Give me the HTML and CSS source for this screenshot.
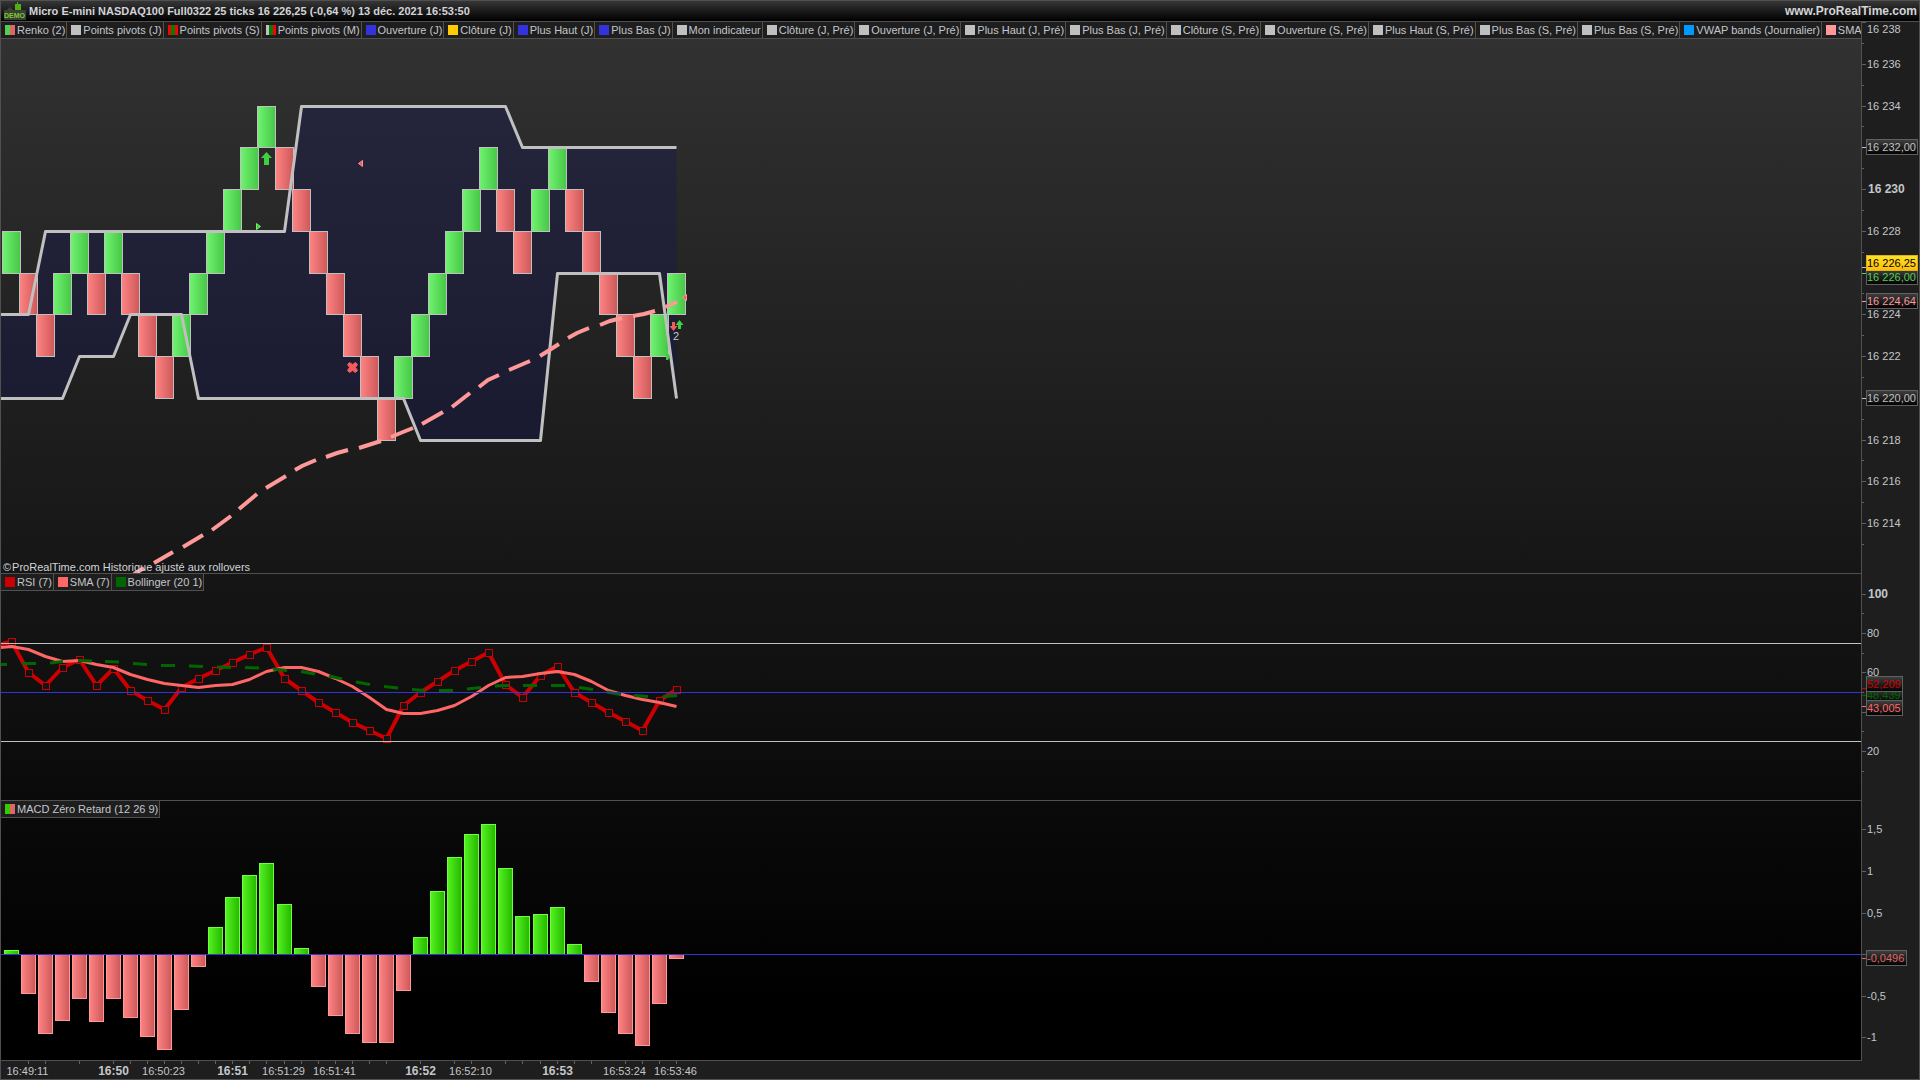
FILE: index.html
```html
<!DOCTYPE html>
<html lang="fr">
<head>
<meta charset="utf-8">
<title>Micro E-mini NASDAQ100 Full0322</title>
<link rel="stylesheet" href="styles.css">
</head>
<body>
<div class="window">
  <header class="titlebar">
    <svg class="demo" width="24" height="20" aria-hidden="true">
      <path class="demo-dark" d="M7 6v3M5 8h4v4H5z"/>
      <path class="demo-green" d="M14 1h1v2h3v7h-6V3h2z"/>
      <rect class="demo-plate" x="1" y="9" width="22" height="10"/>
      <text class="demo-text" x="1" y="17">DEMO</text>
    </svg>
    <h1 class="title">Micro E-mini NASDAQ100 Full0322 25 ticks 16 226,25 (-0,64 %) 13 déc. 2021 16:53:50</h1>
    <a class="site" href="#">www.ProRealTime.com</a>
  </header>
  <main class="body">
    <div class="charts">
      <section class="pane">
        <ul class="legend">
          <li><i class="sw sw-renko"></i>Renko (2)</li>
          <li><i class="sw sw-grey"></i>Points pivots (J)</li>
          <li><i class="sw sw-pivot-s"></i>Points pivots (S)</li>
          <li><i class="sw sw-pivot-m"></i>Points pivots (M)</li>
          <li><i class="sw sw-blue"></i>Ouverture (J)</li>
          <li><i class="sw sw-gold"></i>Clôture (J)</li>
          <li><i class="sw sw-blue"></i>Plus Haut (J)</li>
          <li><i class="sw sw-blue"></i>Plus Bas (J)</li>
          <li><i class="sw sw-grey"></i>Mon indicateur</li>
          <li><i class="sw sw-grey"></i>Clôture (J, Pré)</li>
          <li><i class="sw sw-grey"></i>Ouverture (J, Pré)</li>
          <li><i class="sw sw-grey"></i>Plus Haut (J, Pré)</li>
          <li><i class="sw sw-grey"></i>Plus Bas (J, Pré)</li>
          <li><i class="sw sw-grey"></i>Clôture (S, Pré)</li>
          <li><i class="sw sw-grey"></i>Ouverture (S, Pré)</li>
          <li><i class="sw sw-grey"></i>Plus Haut (S, Pré)</li>
          <li><i class="sw sw-grey"></i>Plus Bas (S, Pré)</li>
          <li><i class="sw sw-grey"></i>Plus Bas (S, Pré)</li>
          <li><i class="sw sw-sky"></i>VWAP bands (Journalier)</li>
          <li><i class="sw sw-pink"></i>SMA</li>
        </ul>
        <svg class="plot" id="price"></svg>
        <p class="credit"><span>©</span><span>ProRealTime.com</span><span class="note">Historique ajusté aux rollovers</span></p>
      </section>
      <section class="pane">
        <ul class="legend">
          <li><i class="sw sw-red"></i>RSI (7)</li>
          <li><i class="sw sw-coral"></i>SMA (7)</li>
          <li><i class="sw sw-green"></i>Bollinger (20 1)</li>
        </ul>
        <svg class="plot" id="rsi"></svg>
      </section>
      <section class="pane">
        <ul class="legend">
          <li><i class="sw sw-macd"></i>MACD Zéro Retard (12 26 9)</li>
        </ul>
        <svg class="plot" id="macd"></svg>
      </section>
    </div>
    <aside class="scales">
      <svg class="scale" id="price-scale"></svg>
      <svg class="scale" id="rsi-scale"></svg>
      <svg class="scale" id="macd-scale"></svg>
    </aside>
  </main>
  <footer class="times"><svg class="plot" id="time-scale"></svg></footer>
</div>
<svg class="defs" width="0" height="0" aria-hidden="true">
  <defs>
    <linearGradient id="g-up"><stop offset="0" stop-color="#70f470"/><stop offset="1" stop-color="#46c646"/></linearGradient>
    <linearGradient id="g-down"><stop offset="0" stop-color="#ff8484"/><stop offset="1" stop-color="#cd5858"/></linearGradient>
    <linearGradient id="g-macd"><stop offset="0" stop-color="#55f220"/><stop offset="1" stop-color="#24b800"/></linearGradient>
    <linearGradient id="g-tag" x2="0" y2="1"><stop offset="0" stop-color="#404040"/><stop offset="1" stop-color="#000"/></linearGradient>
    <linearGradient id="g-last" x2="0" y2="1"><stop offset="0" stop-color="#ffe128"/><stop offset="1" stop-color="#ffbe0a"/></linearGradient>
  </defs>
</svg>
<script src="chart.js"></script>
</body>
</html>
```
FILE: styles.css
```css
* { box-sizing: border-box; }
body {
  margin: 0;
  background: #1e1e1e;
  color: #c3c6cb;
  font: 11px/14px "Liberation Sans", Arial, sans-serif;
}
.window {
  min-height: 100vh;
  display: flex;
  flex-direction: column;
  border: 1px solid #505050;
}
.titlebar {
  flex: none;
  height: 21px;
  display: flex;
  align-items: center;
  gap: 2px;
  padding: 0 2px;
  border-bottom: 1px solid #505050;
  background: linear-gradient(#363636, #000);
}
.demo { flex: none; }
.demo-dark { fill: #3c4a3c; stroke: #3c4a3c; }
.demo-green { fill: #4fae14; }
.demo-plate { fill: #3a4038; }
.demo-text { font: bold 7px "Liberation Sans", Arial, sans-serif; fill: #7ccc28; }
.title { margin: 0; font-size: 11px; font-weight: bold; line-height: 16px; color: #d2d4d8; white-space: nowrap; }
.site { margin-left: auto; font-size: 12px; font-weight: bold; line-height: 16px; color: #d2d4d8; text-decoration: none; }

.body { flex: 1; display: flex; }
.charts, .scales {
  display: grid;
  grid-template-rows: minmax(0, 552fr) minmax(0, 227fr) minmax(0, 260fr);
}
.charts {
  flex: 1;
  min-width: 0;
  background: linear-gradient(#323232, #1a1a1a 45%, #0a0a0a 75%, #000 95%);
}
.pane { position: relative; min-width: 0; overflow: hidden; border-bottom: 1px solid #505050; }
.plot { display: block; width: 100%; height: 100%; }
.legend {
  position: absolute;
  top: 0;
  left: 0;
  z-index: 1;
  display: flex;
  margin: 0;
  padding: 0;
  list-style: none;
}
.legend li {
  flex: none;
  display: flex;
  align-items: center;
  gap: 2px;
  height: 17px;
  padding: 0 1px 0 4px;
  border: solid #505050;
  border-width: 0 1px 1px 0;
  background: #1e1e1e;
  white-space: nowrap;
}
.sw { width: 10px; height: 10px; }
.sw-renko { background: linear-gradient(90deg, #55cc55 50%, #dd6666 50%); }
.sw-macd { background: linear-gradient(90deg, #33cc00 50%, #dd6666 50%); }
.sw-pivot-s { background: linear-gradient(90deg, #ff0000 30%, #008000 30% 70%, #ff0000 70%); }
.sw-pivot-m { background: linear-gradient(90deg, #c0c0c0 30%, #008000 30% 70%, #ff0000 70%); }
.sw-grey { background: #c0c0c0; }
.sw-blue { background: #3333dd; }
.sw-gold { background: #ffcc00; }
.sw-sky { background: #0099ff; }
.sw-pink { background: #ff9999; }
.sw-red { background: #cc0000; }
.sw-coral { background: #ff6666; }
.sw-green { background: #006600; }
.credit {
  position: absolute;
  left: 2px;
  bottom: 0;
  display: flex;
  gap: 1px;
  margin: 0;
  line-height: 12px;
  color: #d2d4d8;
}
.note { padding-left: 2px; }

.scales {
  flex: none;
  width: 58px;
  border-left: 1px solid #505050;
}
.scale { display: block; width: 100%; height: 100%; overflow: hidden; }
.times { flex: none; height: 18px; }
.defs { position: absolute; }

/* plot marks */
.up { fill: url(#g-up); stroke: #c0c0c0; }
.down { fill: url(#g-down); stroke: #c0c0c0; }
.cloud { fill: rgb(22 22 82 / 37%); }
.channel { fill: none; stroke: #c0c0c0; stroke-width: 3; stroke-linejoin: round; }
.sma50 { fill: none; stroke: #ff9999; stroke-width: 4; }
.buy { fill: #3fd03f; }
.sell { fill: #f25c5c; }
.cross { fill: #f25c5c; stroke: #f25c5c; stroke-linejoin: round; }
.buy-entry { fill: #3fd03f; stroke: #6cf06c; stroke-width: 1; }
.sell-entry { fill: #f25c5c; stroke: #ff9494; stroke-width: 1; }
.rsi { fill: none; stroke: #cc0000; stroke-width: 4; stroke-linejoin: round; }
.dot { fill: #131313; stroke: #cc0000; }
.sma7 { fill: none; stroke: #ff6666; stroke-width: 3; stroke-linejoin: round; }
.boll { fill: none; stroke: #006600; stroke-width: 3; }
.bound { fill: #c0c0c0; }
.middle { fill: #3333dd; }
.macd-up { fill: url(#g-macd); stroke: #70ff40; }
.macd-down { fill: url(#g-down); stroke: #ff9999; }

/* scale marks */
.tick { fill: #606060; }
.label { fill: #c3c6cb; }
.strong { font-size: 12px; font-weight: bold; }
.mid { text-anchor: middle; }
.tag { fill: url(#g-tag); stroke: #606060; }
.tag-last { fill: url(#g-last); stroke: #e0b010; }
.c-grey { fill: #c0c0c0; }
.c-black { fill: #000; }
.c-green { fill: #55cc55; }
.c-pink { fill: #ff9999; }
.c-red { fill: #cc0000; }
.c-dark { fill: #006600; }
.c-coral { fill: #ff6666; }
.c-rose { fill: #dd6666; }
```
FILE: chart.js
```js
const NS = "http://www.w3.org/2000/svg";

function layer(id, top) {
  const g = document.createElementNS(NS, "g");
  g.setAttribute("transform", `translate(-1 ${-top})`);
  document.getElementById(id).append(g);
  return g;
}
function add(parent, name, attrs, text) {
  const el = document.createElementNS(NS, name);
  for (const key in attrs) el.setAttribute(key, attrs[key]);
  if (text) el.textContent = text;
  parent.append(el);
  return el;
}

// Time axis: one slot per brick
const slot = i => 4 + 17 * i + (i >= 16) + (i >= 31);
const mid = i => slot(i) + 7.5;
// Price axis: 2 points are 41.75 px
const py = p => Math.floor(106 + (234 - p) * 20.875);
const points = list => list.map(p => p.join(",")).join(" ");
const dashes = list => list.map(d => `M${d[0]} ${d[1]}L` + d.slice(2).join(" ")).join("");

// ---------- Price ----------
const price = layer("price", 22);
const high = [[0, 314.5], [28.5, 314.5], [45.5, 231.5], [284.5, 231.5], [301.5, 106.5], [505.5, 106.5], [522.5, 147.5], [676.5, 147.5]];
const low = [[0, 398.5], [62.5, 398.5], [79.5, 356.5], [113.5, 356.5], [130.5, 314.5], [181.5, 314.5], [198.5, 398.5], [403.5, 398.5],
  [420.5, 440.5], [540.5, 440.5], [557.5, 273.5], [659.5, 273.5], [676.5, 398.5]];
add(price, "polygon", { class: "cloud", points: points([...high, ...[...low].reverse()]) });

const bricks = "U228 D226 D224 U226 U228 D226 U228 D226 D224 D222 U224 U226 U228 U230 U232 U234 D232 D230 D228 D226 " +
  "D224 D222 D220 U222 U224 U226 U228 U230 U232 D230 D228 U230 U232 D230 D228 D226 D224 D222 U224 U226";
bricks.split(" ").forEach((b, i) => {
  const top = +b.slice(1);
  add(price, "rect", {
    class: b[0] === "U" ? "up" : "down",
    x: slot(i) - 1.5, y: py(top) + 0.5, width: 18, height: py(top - 2) - py(top)
  });
});
add(price, "polyline", { class: "channel", points: points(high) });
add(price, "polyline", { class: "channel", points: points(low) });
add(price, "path", { class: "sma50", d: dashes([
  [134, 574, 144, 568], [154, 563, 173, 552], [183, 547, 203, 535], [212, 530, 231, 516], [239, 509, 257, 494],
  [266, 488, 286, 476], [295, 470, 302, 466, 316, 460], [326, 457, 337, 453, 348, 450], [359, 448, 381, 441],
  [391, 437, 403, 432, 413, 428], [422, 424, 443, 412], [452, 407, 470, 393], [479, 387, 488, 380, 499, 375],
  [509, 370, 530, 361], [540, 356, 559, 344], [568, 338, 577, 333, 589, 328], [600, 325, 610, 321, 622, 318],
  [633, 316, 644, 314, 655, 311], [665, 307, 677, 302]
]) });
add(price, "path", { class: "buy", d: "M266.5 152L272 158H269V165H264V158H261z" });
add(price, "path", { class: "cross", d: "M349.5 362.5L352.5 364.5L355.5 362.5L357.5 364.5L355.5 367.5L357.5 370.5L355.5 372.5L352.5 370.5L349.5 372.5L347.5 370.5L349.5 367.5L347.5 364.5z" });
add(price, "path", { class: "buy-entry", d: "M256.5 223.5L260.5 226.5L256.5 229.5z" });
add(price, "path", { class: "sell-entry", d: "M362.5 160.5L358.5 163.5L362.5 166.5z" });
add(price, "path", { class: "sell-entry", d: "M686.5 294.5L682.5 297.5L686.5 300.5z" });
add(price, "path", { class: "buy", d: "M666 353H668L670 356.5L668 360H666z" });
add(price, "path", { class: "sell", d: "M673.5 331L677.5 326H675V322H672V326H669.5z" });
add(price, "path", { class: "buy", d: "M679.5 320L683.5 325H681V329H678V325H675.5z" });
add(price, "text", { class: "label mid", x: 676, y: 340 }, "2");

// ---------- RSI ----------
const rsi = layer("rsi", 574);
const rsiY = [641, 672, 685, 667, 659, 685, 668, 690, 700, 709, 687, 678, 670, 662, 654, 647, 678, 690, 702, 712,
  722, 730, 738, 705, 692, 681, 670, 661, 652, 684, 697, 675, 666, 692, 702, 712, 721, 730, 700, 689];
const smaY = [646, 649, 656, 661, 660, 664, 667, 674, 679, 683, 685, 687, 685, 684, 679, 671, 667, 667, 671, 678,
  686, 697, 709, 713, 713, 710, 705, 696, 685, 677, 676, 673, 671, 674, 681, 690, 695, 699, 702, 706];
const series = (start, ys) => points([[0, start], ...ys.map((y, i) => [mid(i), y + 0.5])]);
add(rsi, "polyline", { class: "rsi", points: series(644.5, rsiY) });
rsiY.forEach((y, i) => add(rsi, "rect", { class: "dot", x: mid(i) - 3, y: y - 2.5, width: 7, height: 7 }));
add(rsi, "polyline", { class: "sma7", points: series(647.5, smaY) });
add(rsi, "path", { class: "boll", d: dashes([
  [0, 664.5, 7, 664.5], [22, 663.5, 36, 663.5], [50, 663, 63, 661.5], [78, 660.5, 92, 661], [105, 661.5, 119, 662],
  [133, 663.5, 147, 664.5], [161, 665.5, 175, 665.5], [189, 666, 203, 666.5], [217, 667, 231, 667.5], [245, 667.5, 259, 668],
  [273, 669, 287, 670.5], [301, 671.5, 315, 674], [329, 676, 342, 679], [356, 682, 370, 684.5], [384, 686.5, 398, 688],
  [412, 689.5, 425, 690.5], [439, 690.5, 453, 690.5], [467, 689, 481, 687.5], [495, 686, 509, 685.5], [523, 685.5, 537, 685.5],
  [551, 685.5, 565, 685.5], [579, 687.5, 593, 689.5], [607, 692, 621, 694.5], [634, 695.5, 648, 696.5], [663, 696.5, 677, 695.5]
]) });
add(rsi, "rect", { class: "bound", x: 0, y: 643, width: "101%", height: 1 });
add(rsi, "rect", { class: "bound", x: 0, y: 741, width: "101%", height: 1 });
add(rsi, "rect", { class: "middle", x: 0, y: 692, width: "101%", height: 1 });

// ---------- MACD ----------
const macd = layer("macd", 801);
const ends = [950, 994, 1034, 1021, 999, 1022, 999, 1018, 1037, 1050, 1010, 967, 927, 897, 875, 863, 904, 948, 987, 1016,
  1034, 1043, 1043, 991, 937, 891, 857, 834, 824, 868, 916, 914, 907, 944, 982, 1013, 1034, 1046, 1004, 959];
ends.forEach((y, i) => {
  const up = y < 954;
  add(macd, "rect", {
    class: up ? "macd-up" : "macd-down",
    x: slot(i) + 0.5, width: 14,
    y: up ? y + 0.5 : 954.5, height: up ? 954 - y : y - 955
  });
});
add(macd, "rect", { class: "middle", x: 0, y: 954, width: "101%", height: 1 });

// ---------- Scales ----------
function tick(g, y, length, cls) {
  add(g, "rect", { class: cls || "tick", x: 1, y, width: length, height: 1 });
}
function label(g, y, text, strong) {
  tick(g, y, 4);
  add(g, "text", { class: strong ? "label strong" : "label", x: strong ? 7 : 6, y: y + 4 }, text);
}
function tag(g, top, mark, width, text, color, box) {
  tick(g, mark, 4, color === "c-black" ? "c-grey" : color);
  add(g, "rect", { class: box || "tag", x: 5.5, y: top + 0.5, width, height: 15 });
  add(g, "text", { class: color, x: 6, y: top + 12 }, text);
}

const ps = layer("price-scale", 22);
for (let p = 238; p >= 213; p -= 1) if (p % 2) tick(ps, py(p), 2);
tick(ps, 22, 4);
add(ps, "text", { class: "label", x: 6, y: 33 }, "16 238");
for (const p of [236, 234, 228, 224, 222, 218, 216, 214]) label(ps, py(p), `16 ${p}`);
label(ps, py(230), "16 230", true);
tag(ps, 139, 147, 51, "16 232,00", "c-grey");
tag(ps, 269, 273, 51, "16 226,00", "c-green");
tag(ps, 255, 267, 51, "16 226,25", "c-black", "tag-last");
tag(ps, 293, 301, 51, "16 224,64", "c-pink");
tag(ps, 390, 398, 51, "16 220,00", "c-grey");

const rs = layer("rsi-scale", 574);
for (const y of [613, 653, 692, 731, 771]) tick(rs, y, 2);
tick(rs, 712, 4);
label(rs, 594, "100", true);
label(rs, 633, "80");
label(rs, 672, "60");
label(rs, 751, "20");
tag(rs, 687, 695, 36, "48,439", "c-dark");
tag(rs, 676, 688, 36, "52,209", "c-red");
tag(rs, 700, 706, 36, "43,005", "c-coral");

const ms = layer("macd-scale", 801);
[[829, "1,5"], [871, "1"], [913, "0,5"], [954, "0"], [996, "-0,5"], [1037, "-1"]].forEach(([y, t]) => label(ms, y, t));
tag(ms, 950, 958, 40, "-0,0496", "c-rose");

const ts = layer("time-scale", 1061);
for (let i = 1; i < 40; i++) {
  if (![3, 5, 23, 25, 28, 35].includes(i)) add(ts, "rect", { class: "tick", x: slot(i) + 7, y: 1061, width: 1, height: 3 });
}
[[1, "16:49:11"], [9, "16:50:23"], [16, "16:51:29"], [19, "16:51:41"], [27, "16:52:10"], [36, "16:53:24"], [39, "16:53:46"]]
  .forEach(([i, t]) => add(ts, "text", { class: "label mid", x: mid(i) - 1, y: 1075 }, t));
[[6, "16:50"], [13, "16:51"], [24, "16:52"], [32, "16:53"]]
  .forEach(([i, t]) => add(ts, "text", { class: "label mid strong", x: mid(i), y: 1075 }, t));
```
